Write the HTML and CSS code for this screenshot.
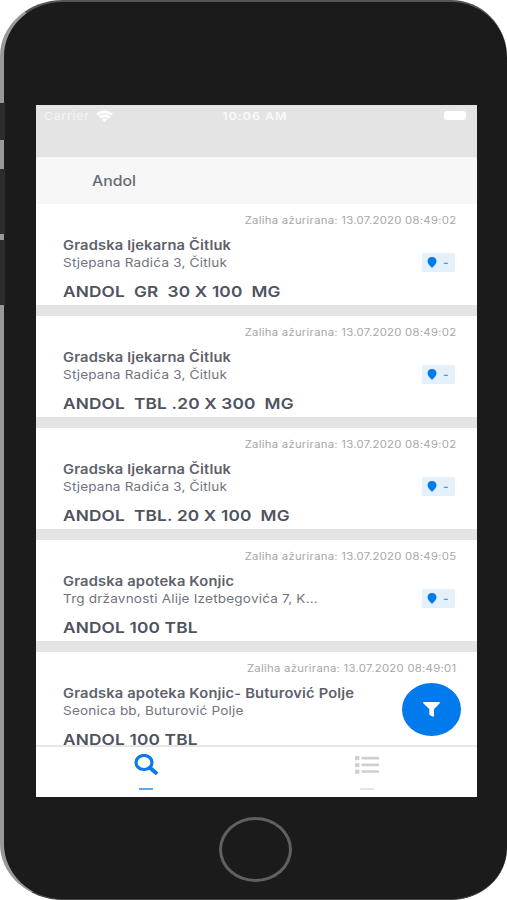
FILE: index.html
```html
<!DOCTYPE html>
<html lang="bs">
<head>
<meta charset="utf-8">
<title>Andol</title>
<link rel="stylesheet" href="styles.css">
</head>
<body>
<div class="device">
  <i class="key key-mute"></i><i class="key key-up"></i><i class="key key-down"></i>
  <div class="phone">
    <main class="screen">
      <header class="status">
        <span class="carrier"><b class="t carrier-name">Carrier</b>
          <svg class="wifi" viewBox="0 0 17 12"><path d="M0 3.8Q8.500-3.200 17 3.800L15.200 5.700Q8.500.300 1.800 5.700ZM2.800 6.500Q8.500 1.900 14.200 6.500L12.300 8.400Q8.500 5.600 4.700 8.400ZM5.500 9.200Q8.500 7.200 11.500 9.200L8.500 12Z" fill="#fff"/></svg>
        </span>
        <b class="t clock">10:06 AM</b>
        <span class="battery"></span>
      </header>
      <div class="search"><span class="t query">Andol</span></div>
      <section class="list">
        <article class="card">
          <div class="t date">Zaliha ažurirana: 13.07.2020 08:49:02</div>
          <div class="info"><div><div class="t name">Gradska ljekarna Čitluk</div><div class="t addr">Stjepana Radića 3, Čitluk</div></div>
            <div class="dist"><svg class="pin" viewBox="0 0 10 11"><path d="M5 0C8 0 9.500 2 9.500 4.300C9.500 7 7 8.500 5 11C3 8.500.5 7 .5 4.300C.5 2 2 0 5 0Z" fill="#007aed"/></svg><span>-</span></div></div>
          <div class="t product">ANDOL&nbsp; GR&nbsp; 30 X 100&nbsp; MG</div>
        </article>
        <article class="card">
          <div class="t date">Zaliha ažurirana: 13.07.2020 08:49:02</div>
          <div class="info"><div><div class="t name">Gradska ljekarna Čitluk</div><div class="t addr">Stjepana Radića 3, Čitluk</div></div>
            <div class="dist"><svg class="pin" viewBox="0 0 10 11"><path d="M5 0C8 0 9.500 2 9.500 4.300C9.500 7 7 8.500 5 11C3 8.500.5 7 .5 4.300C.5 2 2 0 5 0Z" fill="#007aed"/></svg><span>-</span></div></div>
          <div class="t product">ANDOL&nbsp; TBL .20 X 300&nbsp; MG</div>
        </article>
        <article class="card">
          <div class="t date">Zaliha ažurirana: 13.07.2020 08:49:02</div>
          <div class="info"><div><div class="t name">Gradska ljekarna Čitluk</div><div class="t addr">Stjepana Radića 3, Čitluk</div></div>
            <div class="dist"><svg class="pin" viewBox="0 0 10 11"><path d="M5 0C8 0 9.500 2 9.500 4.300C9.500 7 7 8.500 5 11C3 8.500.5 7 .5 4.300C.5 2 2 0 5 0Z" fill="#007aed"/></svg><span>-</span></div></div>
          <div class="t product">ANDOL&nbsp; TBL. 20 X 100&nbsp; MG</div>
        </article>
        <article class="card">
          <div class="t date">Zaliha ažurirana: 13.07.2020 08:49:05</div>
          <div class="info"><div><div class="t name">Gradska apoteka Konjic</div><div class="t addr">Trg državnosti Alije Izetbegovića 7, K...</div></div>
            <div class="dist"><svg class="pin" viewBox="0 0 10 11"><path d="M5 0C8 0 9.500 2 9.500 4.300C9.500 7 7 8.500 5 11C3 8.500.5 7 .5 4.300C.5 2 2 0 5 0Z" fill="#007aed"/></svg><span>-</span></div></div>
          <div class="t product">ANDOL 100 TBL</div>
        </article>
        <article class="card">
          <div class="t date">Zaliha ažurirana: 13.07.2020 08:49:01</div>
          <div class="info"><div><div class="t name">Gradska apoteka Konjic- Buturović Polje</div><div class="t addr">Seonica bb, Buturović Polje</div></div></div>
          <div class="t product">ANDOL 100 TBL</div>
        </article>
      </section>
      <nav class="tabs">
        <a class="tab active"><svg class="find" viewBox="0 0 24 21"><ellipse cx="10" cy="8.500" rx="8" ry="7" fill="none" stroke="#0a7bea" stroke-width="3.200"/><path d="M16 13.800L21.800 18.800" stroke="#0a7bea" stroke-width="4" stroke-linecap="round"/></svg><i class="mark"></i></a>
        <a class="tab"><svg class="menu" viewBox="0 0 24 18"><g fill="#cfcfcf"><rect width="4.500" height="4.200" rx="1"/><rect y="7" width="4.500" height="4.200" rx="1"/><rect y="13.500" width="4.500" height="4.200" rx="1"/><rect x="6.500" y=".8" width="17.500" height="2.600" rx=".7"/><rect x="6.500" y="7.600" width="17.500" height="2.600" rx=".7"/><rect x="6.500" y="14.200" width="17.500" height="2.600" rx=".7"/></g></svg><i class="mark"></i></a>
      </nav>
      <div class="fab"><svg class="funnel" viewBox="0 0 17 15"><path d="M.7 0H16.300Q17.300.5 16.500 1.500L11 7V14Q10.800 15 9.800 14.700L6.800 13Q6.300 12.600 6.300 12V7L.5 1.500Q-.3.500.7 0Z" fill="#fff"/></svg></div>
    </main>
    <div class="home"></div>
  </div>
</div>
</body>
</html>
```
FILE: styles.css
```css
* { box-sizing: border-box; }
body { margin: 0; background: #fff; font-family: Inter, "Liberation Sans", sans-serif; overflow: hidden; }
.device { position: relative; width: 507px; height: 900px; overflow: hidden; }
.phone {
  width: 507px; height: 900px; padding: 103px 30px 0 32px;
  background: #1b1b1b; border-style: solid; border-width: 2px 0 1px 4px;
  border-color: #555 #1b1b1b #444 #999; border-radius: 63px 56px 56px 63px / 56px 57px 52px 56px;
}
.key { position: absolute; left: 0; width: 5px; background: #2c2c2c; z-index: 1; }
.key-mute { top: 103px; height: 37px; }
.key-up { top: 169px; height: 65px; }
.key-down { top: 240px; height: 65px; }
.screen { position: relative; width: 441px; height: 692px; background: #e4e4e4; overflow: hidden; display: flex; flex-direction: column; }
.t { white-space: pre; transform: scaleX(1.13); transform-origin: 0 50%; }
.status { height: 52px; flex: none; display: grid; grid-template-columns: 1fr auto 1fr; align-items: start; padding: 5px 11px 0 8px; color: #fafafa; font-size: 11px; line-height: 12px; }
.carrier { display: flex; gap: 7px; }
.carrier-name { font-weight: 400; letter-spacing: .6px; width: 45px; color: #f5f5f5; }
.wifi { width: 17px; height: 12px; }
.clock { font-weight: 600; letter-spacing: .9px; transform-origin: 50% 50%; }
.battery { justify-self: end; width: 22px; height: 9px; margin-top: 1px; border-radius: 3px; background: #fff; }
.search { height: 47px; flex: none; background: #f7f7f7; padding-left: 56px; border-radius: 3px 3px 0 0; display: flex; align-items: center; }
.query { font-size: 14px; font-weight: 500; color: #686b72; }
.list { flex: 1; min-height: 0; overflow: hidden; display: flex; flex-direction: column; gap: 11px; }
.card { height: 101px; flex: none; background: #fff; padding: 9px 21px 0 27px; display: flex; flex-direction: column; }
.date { align-self: flex-end; transform-origin: 100% 50%; font-size: 10px; line-height: 14px; color: #a5a7aa; letter-spacing: .25px; }
.info { height: 50px; padding-top: 9px; display: flex; justify-content: space-between; }
.name { font-size: 13px; font-weight: 600; line-height: 18px; color: #5d616b; letter-spacing: .15px; }
.addr { font-size: 12px; line-height: 17px; color: #70747d; letter-spacing: .17px; }
.dist { width: 33px; height: 19px; margin: 17px 1px 0 0; background: #e3f1fd; border-radius: 2px; display: flex; align-items: center; gap: 6px; padding-left: 5px; color: #3f9bed; font-size: 12px; font-weight: 600; }
.pin { width: 10px; height: 11px; }
.product { align-self: flex-start; transform: scaleX(1.15); font-size: 15px; font-weight: 600; line-height: 20px; margin-top: 5px; color: #4e535f; letter-spacing: .15px; }
.tabs { height: 52px; flex: none; background: #fff; border-top: 2px solid #e7e7e7; display: flex; }
.tab { flex: 1; display: flex; flex-direction: column; align-items: center; padding-top: 7px; color: #e6e6e6; }
.active { color: #5aa8f0; }
.find { width: 24px; height: 21px; }
.menu { width: 24px; height: 18px; margin: 2px 0 1px; }
.mark { width: 14px; height: 2px; margin-top: 13px; background: currentColor; }
.fab { position: absolute; right: 16px; bottom: 61px; width: 59px; height: 53px; border-radius: 50%; background: #007aed; display: flex; align-items: center; justify-content: center; }
.funnel { width: 17px; height: 15px; }
.home { width: 73px; height: 65px; margin: 20px 0 0 183px; border: 3px solid #606060; border-radius: 50%; }
```
